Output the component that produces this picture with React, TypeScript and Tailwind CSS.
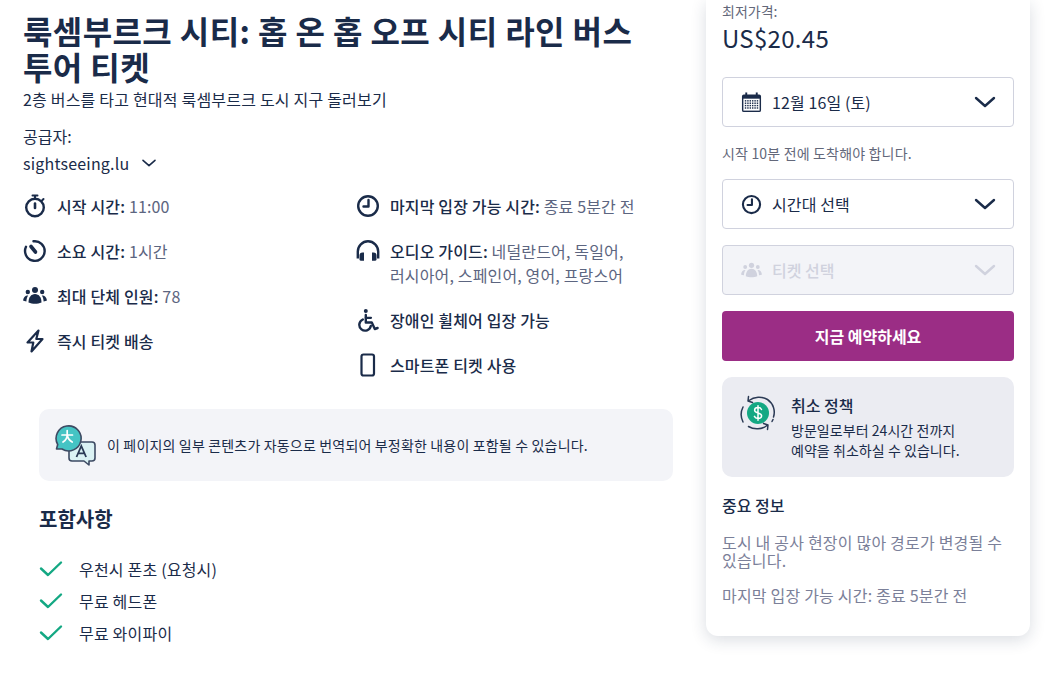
const navy = "#1a2b49"

function Stopwatch() {
  return (
    <svg width="24" height="24" viewBox="0 0 24 24" fill="none" stroke={navy} strokeWidth="2.4" strokeLinecap="round">
      <circle cx="12" cy="13.5" r="8.8" />
      <path d="M12 4V2M9.5 1.500h5M19 6.500l1.500-1.500" strokeWidth="2" />
      <path d="M12 9.500v4.500" strokeWidth="2.600" />
    </svg>
  )
}

function Timer() {
  return (
    <svg width="24" height="24" viewBox="0 0 24 24" fill="none" stroke={navy} strokeWidth="2.4" strokeLinecap="round">
      <path d="M10.500 2.300a9.800 9.800 0 1 1-7.500 5.500" />
      <path d="M8 7.500l4.500 5.500" strokeWidth="3.600" />
    </svg>
  )
}

function Clock({ size = 24 }: { size?: number }) {
  return (
    <svg width={size} height={size} viewBox="0 0 24 24" fill="none" stroke={navy} strokeWidth="2.4" strokeLinecap="round" strokeLinejoin="round">
      <circle cx="12" cy="12" r="9.800" />
      <path d="M12.500 6v6.500H7.500" />
    </svg>
  )
}

function Group({ color = navy, size = 24 }: { color?: string; size?: number }) {
  return (
    <svg width={size} height={size} viewBox="0 0 24 24" fill={color}>
      <circle cx="12" cy="6" r="3" />
      <circle cx="4.800" cy="8" r="2.200" />
      <circle cx="19.200" cy="8" r="2.200" />
      <path d="M12 10c4 0 6.500 3.500 6.500 8.500-2 1-4.200 1.200-6.500 1.200s-4.500-.2-6.500-1.200C5.500 13.500 8 10 12 10z" />
      <path d="M4.400 11.500c-2 0-3.800 1.600-4.400 5 .8.500 2 .8 3.400.9.100-2.300.600-4.300 1.800-5.900zM19.600 11.500c2 0 3.800 1.600 4.400 5-.8.500-2 .8-3.400.9-.1-2.300-.6-4.300-1.800-5.900z" />
    </svg>
  )
}

function Bolt() {
  return (
    <svg width="24" height="24" viewBox="0 0 24 24" fill="none" stroke={navy} strokeWidth="2.200" strokeLinejoin="round">
      <path d="M15.500 1.500L4.500 13.500h5.800L8.500 22.500 19.500 10h-6.200z" />
    </svg>
  )
}

function Headphones() {
  return (
    <svg width="24" height="24" viewBox="0 0 24 24" fill="none">
      <path d="M1.800 19.500v-7a10.200 10.200 0 0 1 20.400 0v7" stroke={navy} strokeWidth="2.400" />
      <path d="M8 13.500H6.500A3 3 0 0 0 3.500 16.500v4c0 .7.500 1.200 1.200 1.200H8zM16 13.500h1.500a3 3 0 0 1 3 3v4c0 .7-.5 1.200-1.200 1.200H16z" fill={navy} />
    </svg>
  )
}

function Wheelchair() {
  return (
    <svg width="24" height="24" viewBox="0 0 24 24" fill="none" stroke={navy} strokeWidth="2.400" strokeLinecap="round" strokeLinejoin="round">
      <circle cx="9.800" cy="3" r="2" fill={navy} stroke="none" />
      <path d="M9.800 7v7.500h6l3 6.500 2.800-1" />
      <path d="M9.800 9.800h5.200" strokeWidth="2.200" />
      <path d="M6.800 11.500a5.800 5.800 0 1 0 8 6.500" />
    </svg>
  )
}

function Phone() {
  return (
    <svg width="24" height="24" viewBox="0 0 24 24" fill="none" stroke={navy} strokeWidth="2.200">
      <rect x="5.500" y="1.500" width="12.500" height="21" rx="2" />
    </svg>
  )
}

function Chevron({ color = navy, size = 24 }: { color?: string; size?: number }) {
  return (
    <svg width={size} height={size} viewBox="0 0 24 24" fill="none" stroke={color} strokeWidth="2.400" strokeLinecap="round" strokeLinejoin="round">
      <path d="M3 8l9 8 9-8" />
    </svg>
  )
}

function Check() {
  return (
    <svg width="24" height="24" viewBox="0 0 24 24" fill="none" stroke="#14a883" strokeWidth="2.400" strokeLinecap="round" strokeLinejoin="round">
      <path d="M2 11.500L9 18 22 5.500" />
    </svg>
  )
}

function Calendar() {
  return (
    <svg width="21" height="21" viewBox="0 0 22 22">
      <path d="M3 2.500h16a2 2 0 0 1 2 2V19a2 2 0 0 1-2 2H3a2 2 0 0 1-2-2V4.500a2 2 0 0 1 2-2z" fill={navy} />
      <rect x="4.500" y="0.500" width="2" height="4" fill={navy} />
      <rect x="15.500" y="0.500" width="2" height="4" fill={navy} />
      <rect x="2.500" y="7" width="17" height="12.500" fill="#fff" />
      {[8.5, 11, 13.5, 16].map((y) =>
        [4, 6.5, 9, 11.5, 14, 16.5].map((x) => <rect key={`${x}-${y}`} x={x} y={y} width="1.500" height="1.500" fill={navy} />),
      )}
    </svg>
  )
}

function Translate() {
  return (
    <svg width="42" height="42" viewBox="0 0 42 42" fill="none">
      <path d="M18 18h20a3 3 0 0 1 3 3v13a3 3 0 0 1-3 3h-3v4l-5-4H18a3 3 0 0 1-3-3V21a3 3 0 0 1 3-3z" fill="#dbf2f4" stroke="#3d4a63" strokeWidth="1.600" strokeLinejoin="round" />
      <path d="M2.500 25l1.200-4.500A12.500 12.500 0 1 1 8 25z" fill="#45c4c4" stroke="#3d4a63" strokeWidth="1.600" strokeLinejoin="round" />
      <path d="M8 11h10.500M13.200 6.500v4.500c0 3-1.800 5.500-4.200 7M13.400 11.500c.6 3 2.300 5.200 4.800 6.500" stroke="#fff" strokeWidth="1.700" strokeLinecap="round" />
      <path d="M22.500 33l4.800-11 4.800 11M24.200 29.300h6.200" stroke="#2b3a55" strokeWidth="1.800" />
    </svg>
  )
}

function RefundIcon() {
  return (
    <svg width="36" height="36" viewBox="0 0 36 36" fill="none">
      <circle cx="18" cy="18" r="11" fill="#14a883" />
      <path d="M21.500 14.500c-.6-1.300-2-1.900-3.500-1.900-1.900 0-3.400.9-3.400 2.600 0 3.600 7 1.800 7 5.500 0 1.700-1.600 2.700-3.600 2.700-1.600 0-3-.7-3.600-2M18 10.800v14.400" stroke="#fff" strokeWidth="1.500" strokeLinecap="round" />
      <path d="M9 5.500C14 1.500 22 1 27.500 4.500c6 4 8 11.500 6 17.500M3 27C.5 22 1 16 3 12M8.500 1.500L8 6l4.500 1.500" stroke="#2b3a55" strokeWidth="1.500" strokeLinecap="round" strokeLinejoin="round" />
      <path d="M27 30.500C22 34.500 14 35 8.500 31.500M27.500 34.500L28 30l-4.500-1.500M33 24.500l-1 2" stroke="#2b3a55" strokeWidth="1.500" strokeLinecap="round" strokeLinejoin="round" />
    </svg>
  )
}

function InfoRow({ icon, label, value }: { icon: React.ReactNode; label: string; value?: React.ReactNode }) {
  return (
    <div className="flex gap-[10px]">
      <div className="flex h-[24px] w-[24px] shrink-0 items-center justify-center">{icon}</div>
      <p className="text-[16px] leading-[24px] tracking-[0.15px] text-[#5c6580]">
        <span className="font-medium text-[#1a2b49]">{label}</span>
        {value}
      </p>
    </div>
  )
}

function SelectBox({ icon, label }: { icon: React.ReactNode; label: string }) {
  return (
    <div className="flex h-[50px] items-center rounded-[4px] border border-[#d0d2de] bg-white pl-[18px] pr-[16px]">
      <div className="flex w-[21px] justify-center">{icon}</div>
      <span className="ml-[10px] flex-1 text-[16px] tracking-[0.1px] text-[#1a2b49]">{label}</span>
      <Chevron />
    </div>
  )
}

export default function App() {
  return (
    <div
      className="flex h-[686px] w-[1048px] overflow-hidden bg-white"
      style={{ fontFamily: '"Noto Sans CJK KR", "Noto Sans", sans-serif' }}
    >
      <main className="w-[706px] shrink-0 pl-[23px] pr-[33px] pt-[12px]">
        <h1 className="pr-[20px] text-[32px] leading-[36px] font-bold tracking-[0.4px] text-[#1a2b49]">룩셈부르크 시티: 홉 온 홉 오프 시티 라인 버스 투어 티켓</h1>
        <p className="mt-[3px] text-[16px] leading-[24px] tracking-[0.2px] text-[#1a2b49]">2층 버스를 타고 현대적 룩셈부르크 도시 지구 돌러보기</p>

        <p className="mt-[13px] text-[16px] leading-[24px] text-[#1a2b49]">공급자:</p>
        <div className="mt-[3px] flex items-center gap-[12px] text-[16px] leading-[24px] tracking-[0.2px] text-[#1a2b49]">
          sightseeing.lu
          <Chevron size={16} />
        </div>

        <div className="mt-[19px] grid grid-cols-[333px_1fr]">
          <div className="flex flex-col gap-[21px]">
            <InfoRow icon={<Stopwatch />} label="시작 시간:" value=" 11:00" />
            <InfoRow icon={<Timer />} label="소요 시간:" value=" 1시간" />
            <InfoRow icon={<Group />} label="최대 단체 인원:" value=" 78" />
            <InfoRow icon={<Bolt />} label="즉시 티켓 배송" />
          </div>
          <div className="flex flex-col gap-[21px]">
            <InfoRow icon={<Clock />} label="마지막 입장 가능 시간:" value=" 종료 5분간 전" />
            <InfoRow
              icon={<Headphones />}
              label="오디오 가이드:"
              value={
                <>
                  {" 네덜란드어, 독일어,"}
                  <br />
                  러시아어, 스페인어, 영어, 프랑스어
                </>
              }
            />
            <InfoRow icon={<Wheelchair />} label="장애인 휠체어 입장 가능" />
            <InfoRow icon={<Phone />} label="스마트폰 티켓 사용" />
          </div>
        </div>

        <div className="mt-[32px] ml-[16px] flex h-[72px] items-center gap-[11px] rounded-[10px] bg-[#f3f4f8] pl-[15px]">
          <Translate />
          <p className="text-[14px] tracking-[0.17px] text-[#1a2b49]">이 페이지의 일부 콘텐츠가 자동으로 번역되어 부정확한 내용이 포함될 수 있습니다.</p>
        </div>

        <h2 className="mt-[24px] ml-[16px] text-[20px] leading-[28px] font-bold text-[#1a2b49]">포함사항</h2>
        <ul className="mt-[24px] ml-[16px] flex flex-col gap-[8px]">
          {["우천시 폰초 (요청시)", "무료 헤드폰", "무료 와이파이"].map((item) => (
            <li key={item} className="flex items-center gap-[16px] text-[16px] leading-[24px] tracking-[0.2px] text-[#1a2b49]">
              <Check />
              {item}
            </li>
          ))}
        </ul>
      </main>

      <aside className="h-[636px] w-[324px] shrink-0 rounded-b-[12px] bg-white px-[16px] shadow-[0_4px_16px_rgba(26,43,73,0.16)]">
        <p className="pt-[1px] text-[14px] leading-[20px] text-[#63687a]">최저가격:</p>
        <p className="text-[24px] leading-[34px] tracking-[0.3px] text-[#1a2b49]">US$20.45</p>

        <div className="mt-[22px]">
          <SelectBox icon={<Calendar />} label="12월 16일 (토)" />
        </div>
        <p className="mt-[16px] text-[14px] leading-[20px] tracking-[0.17px] text-[#63687a]">시작 10분 전에 도착해야 합니다.</p>
        <div className="mt-[16px]">
          <SelectBox icon={<Clock size={21} />} label="시간대 선택" />
        </div>

        <div className="mt-[16px] flex h-[50px] items-center rounded-[4px] border border-[#d0d2de] bg-[#f3f4f8] pl-[18px] pr-[16px]">
          <Group size={21} color="#d0d2de" />
          <span className="ml-[10px] flex-1 text-[16px] font-medium text-[#d0d2de]">티켓 선택</span>
          <Chevron color="#d0d2de" />
        </div>

        <button className="mt-[16px] block h-[50px] w-full rounded-[4px] bg-[#9b2d85] text-[16px] font-bold text-white">지금 예약하세요</button>

        <div className="mt-[16px] flex h-[100px] gap-[15px] rounded-[10px] bg-[#ebecf2] pl-[18px] pt-[18px]">
          <RefundIcon />
          <div>
            <p className="text-[16px] leading-[20px] font-medium text-[#1a2b49]">취소 정책</p>
            <p className="mt-[5px] text-[14px] leading-[20px] tracking-[0.05px] text-[#1a2b49]">
              방문일로부터 24시간 전까지
              <br />
              예약을 취소하실 수 있습니다.
            </p>
          </div>
        </div>

        <p className="mt-[17px] text-[16px] leading-[22px] font-medium text-[#1a2b49]">중요 정보</p>
        <p className="mt-[17px] text-[16px] leading-[18px] tracking-[0.2px] text-[#7b8099]">도시 내 공사 현장이 많아 경로가 변경될 수 있습니다.</p>
        <p className="mt-[17px] text-[16px] leading-[18px] tracking-[0.2px] text-[#7b8099]">마지막 입장 가능 시간: 종료 5분간 전</p>
      </aside>
    </div>
  )
}
